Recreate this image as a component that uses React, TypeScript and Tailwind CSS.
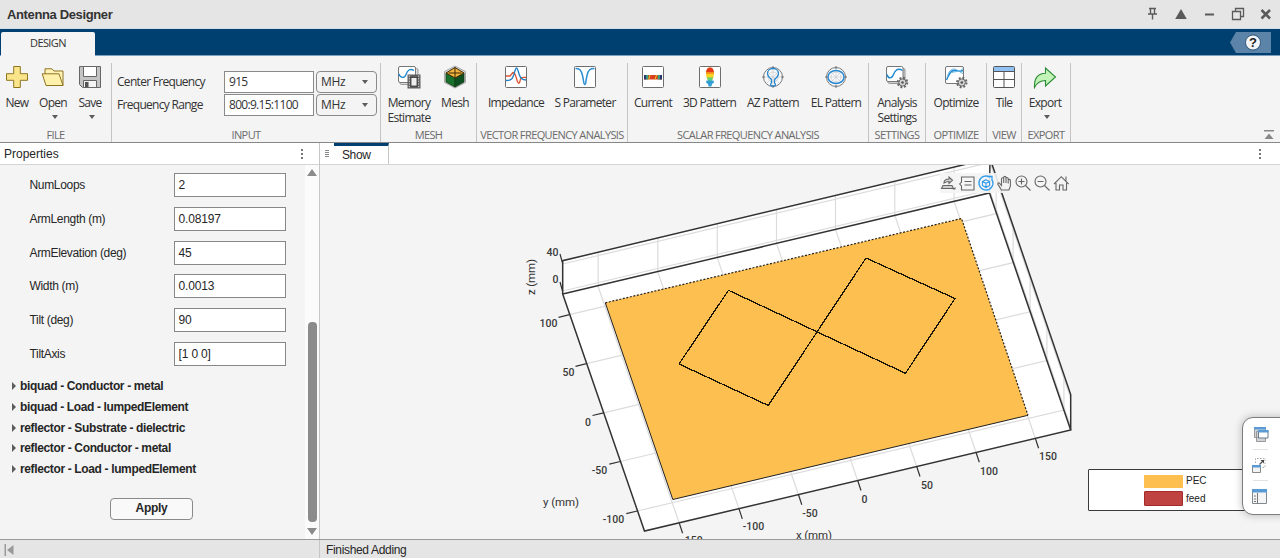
import React from "react";

type P = { children?: React.ReactNode };

const Ico = ({ children }: P) => (
  <svg width="24" height="24" viewBox="0 0 24 24" fill="none" className="block">
    {children}
  </svg>
);

const Gear = ({ x, y }: { x: number; y: number }) => (
  <g transform={`translate(${x} ${y})`}>
    <circle r="4.7" stroke="#666" strokeWidth="2" strokeDasharray="1.9 1.79" fill="none" />
    <circle r="3.6" fill="#d4d4d4" stroke="#666" strokeWidth="1" />
    <circle r="1.3" fill="#555" />
  </g>
);

const NewIcon = () => (
  <Ico>
    <path d="M8.7 1.5h6.6v7.2h7.2v6.6h-7.2v7.2H8.7v-7.2H1.5V8.7h7.2z" fill="#fbe58a" stroke="#8f7420" />
  </Ico>
);
const OpenIcon = () => (
  <Ico>
    <path d="M4 9V3.800h7l2 2.200h9v14.500" fill="#fff3b8" stroke="#8f7420" />
    <path d="M1.200 8.800H18l4 11.700H5z" fill="#fff0ac" stroke="#8f7420" />
  </Ico>
);
const SaveIcon = () => (
  <Ico>
    <path d="M1.500 1.500h21v21h-18l-3-3z" fill="#c4c4c4" stroke="#666" />
    <path d="M5.500 1.500h13v10h-13z" fill="#fff" stroke="#666" />
    <path d="M5.500 15.500h13v7h-13z" fill="#f4f4f4" stroke="#666" />
    <path d="M7 17h3.500v5H7z" fill="#555" />
  </Ico>
);
const MemoryIcon = () => (
  <Ico>
    <rect x="3" y="3.500" width="18" height="16" rx="1.500" fill="#ddd" stroke="#999" />
    <rect x="1.500" y="1.500" width="17" height="16" rx="1.500" fill="#fff" stroke="#777" />
    <path d="M2 9c1.500 4.500 5.500 4.500 7 .5s4-6.500 8-4" stroke="#1d87cf" strokeWidth="1.300" />
    <rect x="10.500" y="9.500" width="13" height="14" fill="#5e5e5e" />
    <rect x="14" y="12.500" width="6" height="8.500" fill="#eee" stroke="#333" strokeWidth=".8" />
    <path d="M12.300 10.500v12M21.700 10.500v12" stroke="#ddd" strokeDasharray="1.300 1.300" />
  </Ico>
);
const MeshIcon = () => (
  <Ico>
    <path d="M12 1l10.500 5.500v11L12 23 1.500 17.500v-11z" fill="#d8d8d8" stroke="#aaa" />
    <path d="M3 8l9 4.500v9.500l-9-5z" fill="#17702b" stroke="#143d17" strokeWidth=".8" />
    <path d="M21 8l-9 4.500v9.500l9-5z" fill="#0d4f20" stroke="#143d17" strokeWidth=".8" />
    <path d="M12 2.500L21 8l-9 5-9-5z" fill="#f2b23e" stroke="#3d2a05" />
    <path d="M12 2.500V13M5.500 8h13" stroke="#3d2a05" />
  </Ico>
);
const Frame = ({ children }: P) => (
  <Ico>
    <rect x="1.500" y="1.500" width="21" height="21" rx="1" fill="#fff" stroke="#6e6e6e" />
    {children}
  </Ico>
);
const ImpedanceIcon = () => (
  <Frame>
    <path d="M2 11h4l3-3.500c1.500 0 2.500 2 3.500 6s2.500 7 3.500 2.500 2-3.500 6-3.500" stroke="#e0532f" strokeWidth="1.300" />
    <path d="M2 15.500c4 0 6-.5 7.500-5s2-7.500 3-7.500 1.700 3 2.700 6.500 3 5.500 6.800 5.500" stroke="#1d7fc4" strokeWidth="1.300" />
  </Frame>
);
const SParamIcon = () => (
  <Frame>
    <path d="M2.500 3.500c4 0 5.500 1 7 7s1 9 2.300 9 .8-3 2.200-9 3-7 7.500-7" stroke="#2f8fd3" strokeWidth="1.500" />
  </Frame>
);
const CurrentIcon = () => (
  <Frame>
    <rect x="3" y="10" width="18" height="4.500" fill="#d8401f" />
    <path d="M3 10h2.200v4.500H3zM18.800 10H21v4.500h-2.200z" fill="#26386e" />
    <path d="M5.200 10h2v4.500h-2zM16.800 10h2v4.500h-2z" fill="#2fa58a" />
    <path d="M7.200 14.500l1.300-4.500h1l-1.300 4.500zM13.500 14.500l1.500-4.500h1l-1.500 4.500z" fill="#e9c928" />
  </Frame>
);
const Pattern3DIcon = () => (
  <Frame>
    <path d="M12 2.500c3 0 4 3 4 6.500s-2 6-2.500 7.500h-3C10 15 8 12.500 8 9s1-6.500 4-6.500z" fill="#f7d322" />
    <path d="M12 2.500c2.600 0 3.600 2 3.900 4.500H8.100C8.400 4.500 9.400 2.500 12 2.500z" fill="#e5391d" />
    <path d="M8.100 7h7.800v1.800H8.100z" fill="#f58a1f" />
    <path d="M8.800 12.500h6.400l-1.600 3.500h-3.200z" fill="#5fcf7a" />
    <path d="M8.500 15.500h7l.5 2-2 1.500-.6 2.500h-2.800L10 19l-2-1.500z" fill="#2f9fd6" />
  </Frame>
);
const Polar = ({ children }: P) => (
  <Ico>
    <circle cx="12" cy="12" r="9.500" fill="#f8fbfd" stroke="#777" />
    <circle cx="12" cy="12" r="5" stroke="#ccc" strokeWidth=".8" />
    <path d="M12 3v18M3 12h18M5.700 5.700l12.600 12.600M18.300 5.700L5.700 18.300" stroke="#ccc" strokeWidth=".7" />
    <path d="M12 1v3M12 20v3M1 12h3M20 12h3" stroke="#777" />
    {children}
  </Ico>
);
const AZIcon = () => (
  <Polar>
    <path d="M10.500 14.500C8 12.500 6.500 11 6.500 8.500c0-3 2.500-5 5.500-5s5.500 2 5.500 5c0 2.500-1.500 4-4 6v3c0 .8 1 1.200 1 2.500-.5 1.500-4.500 1.500-5 0 0-1.300 1-1.700 1-2.500z" stroke="#2787cf" strokeWidth="1.300" />
  </Polar>
);
const ELIcon = () => (
  <Polar>
    <ellipse cx="12" cy="12" rx="8" ry="6.500" stroke="#2787cf" strokeWidth="1.400" />
  </Polar>
);
const SettingsIcon = () => (
  <Ico>
    <rect x="3" y="3.500" width="17" height="15" rx="1.500" fill="#ccc" stroke="#999" />
    <rect x="1.500" y="1.500" width="16.500" height="15" rx="1.500" fill="#fff" stroke="#777" />
    <path d="M2 9.500c1.500 5 5 4 6.500 0s4-7 9-4" stroke="#1d87cf" strokeWidth="1.400" />
    <Gear x={17.500} y={17.500} />
  </Ico>
);
const OptimizeIcon = () => (
  <Ico>
    <rect x="1.500" y="1.500" width="18" height="17" rx="1.500" fill="#fff" stroke="#777" />
    <path d="M2.500 15C5 10 6 5.500 10 5.500s5 1.500 9 0" stroke="#1d87cf" strokeWidth="1.400" />
    <path d="M3 12.500C5 6 7 4 10 4s6 3.500 9 4.500M8 7.500c4-1.500 7 0 11-4" stroke="#61b2e4" />
    <Gear x={17.800} y={17.500} />
  </Ico>
);
const TileIcon = () => (
  <Ico>
    <rect x="1.500" y="1.500" width="21" height="21" rx="1" fill="#fff" stroke="#555" />
    <path d="M2 2h20v4.500H2z" fill="#8fc1f5" />
    <path d="M1.500 6.500h21M1.500 14.500h21M12 6.500v16" stroke="#555" />
  </Ico>
);
const ExportIcon = () => (
  <Ico>
    <path d="M1.500 22.500C1 13 5 8.500 12.500 8.200V3L22.500 12l-10 9v-5.500C7 15.500 4 17.500 1.500 22.500z" fill="#c1f4b6" stroke="#2b8a35" strokeWidth="1.100" />
  </Ico>
);

const Caret = () => <span className="block h-0 w-0 border-x-[3.5px] border-t-[4px] border-x-transparent border-t-[#5c5c5c]" />;

const Tool = ({ w, icon, label, second, menu }: { w: string; icon: React.ReactNode; label: string; second?: string; menu?: boolean }) => (
  <div className={`flex shrink-0 flex-col items-center whitespace-nowrap leading-[15px] ${w}`}>
    {icon}
    <span className="mt-[6px]">{label}</span>
    {second && <span>{second}</span>}
    {menu && <span className="ml-[3px] mt-[5px] flex"><Caret /></span>}
  </div>
);

const Section = ({ w, title, children }: { w: string; title: string; children: React.ReactNode }) => (
  <div className={`mt-[7px] flex h-[79px] shrink-0 flex-col border-r border-[#c4c4c4] ${w}`}>
    <div className="flex h-[63px] shrink-0 pt-[2px]">{children}</div>
    <div className="h-[16px] whitespace-nowrap text-center text-[11px] leading-[18px] tracking-[-0.6px] text-[#6b6b6b]">{title}</div>
  </div>
);

const FreqRow = ({ label, value }: { label: string; value: string }) => (
  <div className="flex h-[21px] items-center">
    <span className="w-[107px]">{label}</span>
    <span className="h-[22px] w-[90px] border border-[#8a8a8a] bg-white pl-[4px] leading-[20px]">{value}</span>
    <span className="ml-[2px] flex h-[22px] w-[61px] items-center justify-between rounded-[4px] border border-[#8a8a8a] pl-[4px] pr-[8px] tracking-[-0.3px]">
      MHz
      <Caret />
    </span>
  </div>
);

const fields: [string, string][] = [
  ["NumLoops", "2"],
  ["ArmLength (m)", "0.08197"],
  ["ArmElevation (deg)", "45"],
  ["Width (m)", "0.0013"],
  ["Tilt (deg)", "90"],
  ["TiltAxis", "[1 0 0]"],
];
const groups = [
  "biquad - Conductor - metal",
  "biquad - Load - lumpedElement",
  "reflector - Substrate - dielectric",
  "reflector - Conductor - metal",
  "reflector - Load - lumpedElement",
];

const xTicks: [number, number, string, number, number][] = [
  [679.3, 523.3, "-150", 692, 540],
  [739, 508.900, "-100", 753.500, 526],
  [798.500, 494.700, "-50", 810, 513],
  [857.700, 480.500, "0", 864.500, 499],
  [916.700, 466.500, "50", 927, 485],
  [976, 452.300, "100", 989, 471],
  [1035.300, 438.300, "150", 1048, 456.500],
];
const yTicks: [number, number, string, number, number][] = [
  [569.500, 314.700, "100", 548.500, 323.500],
  [586.500, 363.700, "50", 568.500, 372],
  [603.500, 412.800, "0", 588, 422],
  [620.300, 461.500, "-50", 599.500, 470.500],
  [637.300, 511, "-100", 613.500, 519.500],
];

const Plot = () => (
  <svg className="block h-full w-full" viewBox="320 165 960 374" preserveAspectRatio="none">
    <path d="M562.700 260.700L990 158.500 1070.700 394.500V430L644.500 531 562.700 294z" fill="#fff" />
    <g stroke="#dcdcdc" fill="none" strokeWidth="1.200">
      {xTicks.map(([x, y, t]) => (
        <path key={t} d={`M${x} ${y}l-81.200-237v-33.500`} />
      ))}
      {yTicks.map(([x, y, t]) => (
        <path key={t} d={`M${x} ${y}l426.600-101v-34.500`} />
      ))}
      <path d="M562.700 264L990 162.500 1070.700 398M562.700 291L989.500 190 1070.700 426.500" />
    </g>
    <g stroke="#333" fill="none" strokeWidth="1.500">
      <path d="M562.700 294L989.500 193 1070.700 430 644.500 531z" />
      <path d="M562.700 294V260.700L990 158.500 1070.700 394.500V430M990 158.500L989.500 193" />
    </g>
    <g stroke="#333" strokeWidth="1.200">
      {xTicks.map(([x, y, t]) => (
        <path key={t} d={`M${x} ${y}l3.300 10`} />
      ))}
      {yTicks.map(([x, y, t]) => (
        <path key={t} d={`M${x} ${y}l-11 2.700`} />
      ))}
      <path d="M562.500 263l-2.500-9M562.500 291l-2.500-9" />
    </g>
    <path d="M605.300 302.800L961.500 218.500 1028 415.300 672.800 499.500z" fill="#fdbf4f" />
    <g fill="none" stroke="#222">
      <path d="M605.300 302.800L961.500 218.500 1028 415.300" strokeDasharray="2 1.600" strokeWidth="1.200" />
      <path d="M605.300 302.800L672.800 499.500 1028 415.300" />
    </g>
    <path d="M728.500 290.300L679 364 768.300 405.500 866 258 955 298.500 905.500 373.300z" fill="none" stroke="#1c1608" strokeWidth="1.300" shapeRendering="crispEdges" />
    <g fill="#3a3a3a" textAnchor="middle" fontSize="10.500" fontWeight="500" className="font-['Roboto',sans-serif]">
      {[...xTicks, ...yTicks].map(([, , t, x, y]) => (
        <text key={`${t}${x}`} x={x} y={y + 3.700}>{t}</text>
      ))}
      <text x="552.500" y="255.500">40</text>
      <text x="555.500" y="282.500">0</text>
    </g>
    <g fill="#333" textAnchor="middle" fontSize="11.500" className="font-['Roboto',sans-serif]">
      <text x="561" y="506" textLength="36">y (mm)</text>
      <text x="814" y="539" textLength="36">x (mm)</text>
      <text x="0" y="0" textLength="36" transform="translate(534.500 277) rotate(-90)">z (mm)</text>
    </g>
  </svg>
);

const AxesBar = () => (
  <svg width="132" height="20" viewBox="940 173 132 20" fill="none" stroke="#666" strokeWidth="1.100" className="absolute left-[620px] top-[8px]">
    <path d="M940 173h65v20h-65z" fill="#f4f4f4" fillOpacity=".9" stroke="none" />
    <path d="M1005 173h67v20h-67z" fill="#f4f4f4" stroke="none" />
    <path d="M941.500 188.500l1.500-3h9l1.500 3zM944 183c0-3 2-4 5-4v-2l3.500 3.300-3.500 3.200v-2c-2 0-3 .5-5 1.500z" fill="#ccc" />
    <path d="M952.500 189.500h3v-2.500z" fill="#666" stroke="none" />
    <path d="M961.500 177h12.500v13h-12.500v-4l-1.800-2 1.800-2zM964.500 181.500h7M964.500 185h7" />
    <g stroke="#2f9bea">
      <path d="M990 177.300a7 7 0 1 0 2.500 3.200M987.500 176.500h4.500v4.500" strokeWidth="1.300" />
      <path d="M986 179.700l3.600 1.800v4l-3.600 2-3.600-2v-4zM982.400 181.500l3.600 1.800 3.600-1.800M986 183.300v4.200" />
    </g>
    <path d="M1001.500 190l-3.500-5.500c-.8-1.500.8-2.200 1.800-1l1.700 2v-6.700c0-1.500 2-1.500 2.200 0v-1.300c0-1.500 2.200-1.500 2.300 0v1c.2-1.300 2.100-1.300 2.200.2v1.500c.3-1.200 2.200-1.200 2.200.3v5c0 2-1 3-1.500 4.500zM1003.700 178v5M1006 178v5M1008.200 179.500v4" />
    <circle cx="1021.500" cy="181.500" r="5.500" />
    <path d="M1025.500 185.500l5 5M1018.500 181.500h6M1021.500 178.500v6" />
    <circle cx="1040.500" cy="181.500" r="5.500" />
    <path d="M1044.500 185.500l5 5M1037.500 181.500h6" />
    <path d="M1054 184l7.300-7.300 7.300 7.300M1056 183v7h3.500v-5h3.500v5h3.500v-7M1066 180.500v-4" />
  </svg>
);

const Legend = () => (
  <div className="absolute left-[768px] top-[304px] flex h-[42px] w-[180px] flex-col gap-[3px] rounded-[1px] border-[1.500px] border-[#3a3a3a] bg-white pl-[55px] pt-[4px] font-['Liberation_Sans',sans-serif] text-[10px] leading-[14px] text-[#222]">
    <div className="flex h-[14px] items-center gap-[3px]"><span className="h-[13px] w-[39px] bg-[#fdbf4f]" />PEC</div>
    <div className="flex h-[15px] items-center gap-[3px]"><span className="h-[15px] w-[39px] rounded-[1px] border border-[#a52a2c] bg-[#bf4441]" />feed</div>
  </div>
);

const FloatPanel = () => (
  <div className="absolute left-[1242px] top-[417px] flex h-[98px] w-[50px] flex-col items-start rounded-[11px] border border-[#7d7d7d] bg-white shadow-[0_0_8px_rgba(0,0,0,0.25)]">
    <svg width="38" height="96" viewBox="1243 418 38 96" fill="none">
      <path d="M1254.500 427.500h11v10h-11zM1256.500 431.500h9v10h-9z" fill="#d0d4d8" stroke="#999" />
      <path d="M1258.500 430.500h9.500v7.500h-9.500z" fill="#fff" stroke="#6a7b8c" />
      <path d="M1254 427h12v2.500h-12zM1258 430h10.500v2.500H1258z" fill="#5b9bd5" />
      <path d="M1253 449.500h15M1253 480.500h15" stroke="#e2e2e2" />
      <path d="M1255.500 463v-4.500h9.500v9h-3" stroke="#aaa" strokeDasharray="1.500 1.500" />
      <path d="M1252.500 465.500h8v7h-8z" fill="#f3f3f3" stroke="#888" />
      <path d="M1252 465h9v2.500h-9z" fill="#5b9bd5" />
      <path d="M1259.500 464.500l3-3" stroke="#555" strokeWidth="1.200" />
      <path d="M1264 460v3.500l-3.500-3.500z" fill="#444" />
      <path d="M1252.500 489.500h14v14h-14z" fill="#f5f5f5" stroke="#808890" />
      <path d="M1252 489h15v3.500h-15z" fill="#5b9bd5" />
      <path d="M1257.500 493v10.500M1254 496h2M1254 499h2M1254 501.500h2" stroke="#777" />
    </svg>
  </div>
);

const Dots = () => (
  <span className="flex flex-col gap-[2px]">
    <i className="h-[2px] w-[2px] bg-[#777]" />
    <i className="h-[2px] w-[2px] bg-[#777]" />
    <i className="h-[2px] w-[2px] bg-[#777]" />
  </span>
);

export default function App() {
  return (
    <div className="relative flex h-[558px] w-[1280px] flex-col overflow-hidden bg-[#f4f4f4] font-['Liberation_Sans',sans-serif] text-[12px] text-[#262626]">
      <header className="flex h-[29px] shrink-0 items-center justify-between border-b border-[#d4dee6] bg-[#e5e5e5] pl-[7px] pr-[8px] text-[13px] font-bold tracking-[-0.37px] text-[#333]">
        <span className="leading-[27px]">Antenna Designer</span>
        <svg width="126" height="18" viewBox="1146 5 126 18" fill="none" stroke="#5a5a5a">
          <path d="M1149 8.500h7M1150.500 8.500v5M1154.500 8.500v5M1148 14h9M1152.500 14v5.500" strokeWidth="1.400" />
          <path d="M1181 9l5.800 10h-11.600z" fill="#5a5a5a" stroke="none" />
          <path d="M1205 14.500h9" strokeWidth="2" />
          <path d="M1235.500 11.500v-3h8v8h-3M1232.500 11.500h8v8h-8z" strokeWidth="1.300" />
          <path d="M1261.500 10l8.500 8.500M1270 10l-8.500 8.500" strokeWidth="2.500" />
        </svg>
      </header>
      <nav className="flex h-[27px] shrink-0 items-start justify-between border-b border-[#7ea0be] bg-[#004071] pl-[1px] pr-[9px] pt-[3px] font-['Open_Sans',sans-serif]">
        <div className="z-10 h-[24px] w-[94px] rounded-t-[2px] bg-[#f4f4f4] text-center text-[11px] leading-[22px] tracking-[-0.6px] text-[#333]">DESIGN</div>
        <svg width="41" height="21" viewBox="0 0 41 21">
          <path d="M6 0h35v21H6L0 10.500z" fill="#5c84a8" />
          <circle cx="23" cy="10.500" r="7.500" fill="#f3f6f8" stroke="#173f63" strokeWidth=".8" />
          <text x="23" y="15" textAnchor="middle" fontSize="13" fontWeight="700" fill="#222" className="font-['Liberation_Sans',sans-serif]">?</text>
        </svg>
      </nav>
      <div className="flex h-[87px] shrink-0 border-b border-[#878787] font-['Open_Sans',sans-serif] text-[12px] tracking-[-0.7px] text-[#333]">
        <Section w="w-[112px]" title="FILE">
          <Tool w="w-[34px]" icon={<NewIcon />} label="New" />
          <Tool w="w-[38px]" icon={<OpenIcon />} label="Open" menu />
          <Tool w="w-[36px]" icon={<SaveIcon />} label="Save" menu />
        </Section>
        <Section w="w-[269px]" title="INPUT">
          <div className="ml-[5px] mt-[6px] flex flex-col gap-[2px]">
            <FreqRow label="Center Frequency" value="915" />
            <FreqRow label="Frequency Range" value="800:9.15:1100" />
          </div>
        </Section>
        <Section w="w-[96px]" title="MESH">
          <Tool w="w-[56px]" icon={<MemoryIcon />} label="Memory" second="Estimate" />
          <Tool w="w-[36px]" icon={<MeshIcon />} label="Mesh" />
        </Section>
        <Section w="w-[151px]" title="VECTOR FREQUENCY ANALYSIS">
          <Tool w="w-[78px]" icon={<ImpedanceIcon />} label="Impedance" />
          <Tool w="w-[60px]" icon={<SParamIcon />} label="S Parameter" />
        </Section>
        <Section w="w-[241px]" title="SCALAR FREQUENCY ANALYSIS">
          <Tool w="w-[50px]" icon={<CurrentIcon />} label="Current" />
          <Tool w="w-[63px]" icon={<Pattern3DIcon />} label="3D Pattern" />
          <Tool w="w-[64px]" icon={<AZIcon />} label="AZ Pattern" />
          <Tool w="w-[62px]" icon={<ELIcon />} label="EL Pattern" />
        </Section>
        <Section w="w-[57px]" title="SETTINGS">
          <Tool w="w-[56px]" icon={<SettingsIcon />} label="Analysis" second="Settings" />
        </Section>
        <Section w="w-[61px]" title="OPTIMIZE">
          <Tool w="w-[60px]" icon={<OptimizeIcon />} label="Optimize" />
        </Section>
        <Section w="w-[35px]" title="VIEW">
          <Tool w="w-[34px]" icon={<TileIcon />} label="Tile" />
        </Section>
        <Section w="w-[49px]" title="EXPORT">
          <Tool w="w-[46px]" icon={<ExportIcon />} label="Export" menu />
        </Section>
        <div className="flex grow items-end justify-end pb-[3px] pr-[6px]">
          <svg width="10" height="9" viewBox="0 0 10 9"><path d="M0 0h10v1.500H0zM5 3.500l4.500 5.500h-9z" fill="#888" /></svg>
        </div>
      </div>
      <div className="flex min-h-0 grow">
        <aside className="flex w-[320px] shrink-0 flex-col border-r border-[#c6c6c6]">
          <div className="flex h-[22px] shrink-0 items-center justify-between border-b border-[#d4d4d4] bg-white pl-[4px] pr-[16px]">
            <span>Properties</span>
            <Dots />
          </div>
          <div className="flex min-h-0 grow">
            <div className="flex grow flex-col pt-[8px]">
              <div className="flex flex-col gap-[9.800px]">
                {fields.map(([l, v]) => (
                  <div key={l} className="flex h-[24px] items-center pl-[29.500px]">
                    <span className="w-[144px] tracking-[-0.33px]">{l}</span>
                    <span className="h-[24px] w-[112px] border border-[#878787] bg-white pl-[4px] leading-[23px] tracking-[-0.15px]">{v}</span>
                  </div>
                ))}
              </div>
              <div className="mt-[10px] flex flex-col">
                {groups.map((g) => (
                  <div key={g} className="flex h-[20.700px] items-center gap-[4px] pl-[12px] font-bold">
                    <span className="h-0 w-0 border-y-[4px] border-l-[4px] border-y-transparent border-l-[#5c5c5c]" />
                    <span className="tracking-[-0.36px]">{g}</span>
                  </div>
                ))}
              </div>
              <div className="ml-[110px] mt-[19px] h-[22px] w-[83px] rounded-[4px] border border-[#8a8a8a] bg-[#f9f9f9] text-center font-bold leading-[19px] tracking-[-0.3px]">Apply</div>
            </div>
            <div className="flex w-[14px] flex-col items-center bg-[#fbfbfb] pb-[4px] pt-[4px]">
              <span className="h-0 w-0 border-x-[5px] border-b-[7px] border-x-transparent border-b-[#8b8b8b]" />
              <span className="mt-[146px] h-[200px] w-[9px] rounded-[4px] bg-[#8b8b8b]" />
              <span className="mt-[6px] h-0 w-0 border-x-[5px] border-t-[7px] border-x-transparent border-t-[#8b8b8b]" />
            </div>
          </div>
        </aside>
        <main className="flex grow flex-col">
          <div className="flex h-[22px] shrink-0 items-center border-b border-[#d4d4d4] bg-white">
            <div className="flex h-full w-[14px] items-center justify-center">
              <span className="flex flex-col gap-[1px]">
                <i className="h-px w-[4px] bg-[#888]" />
                <i className="h-px w-[4px] bg-[#888]" />
                <i className="h-px w-[4px] bg-[#888]" />
                <i className="h-px w-[4px] bg-[#888]" />
              </span>
            </div>
            <div className="h-full w-[55px] border-r border-t-[3px] border-r-[#c6c6c6] border-t-[#004071] pl-[8px] leading-[19px] tracking-[-0.4px]">Show</div>
            <div className="flex grow justify-end pr-[19px]"><Dots /></div>
          </div>
          <div className="relative min-h-0 grow overflow-hidden">
            <Plot />
            <AxesBar />
            <Legend />
          </div>
        </main>
      </div>
      <footer className="flex h-[19px] shrink-0 border-t border-[#999] bg-[#e5e5e5]">
        <div className="flex w-[320px] items-center border-r border-[#c6c6c6] pl-[4px] pt-[2px]">
          <svg width="10" height="12" viewBox="0 0 10 12"><path d="M.5 0H2v12H.5zM9.500 1v10L3 6z" fill="#999" /></svg>
        </div>
        <div className="pl-[6px] leading-[21px] tracking-[-0.33px]">Finished Adding</div>
      </footer>
      <FloatPanel />
    </div>
  );
}
